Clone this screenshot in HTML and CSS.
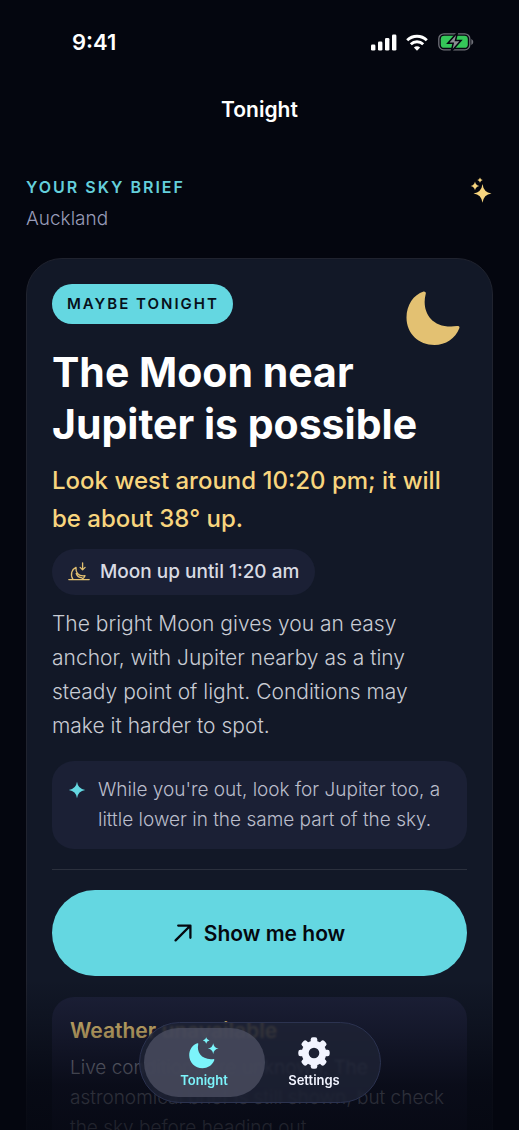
FILE: index.html
```html
<!DOCTYPE html>
<html lang="en">
<head>
<meta charset="utf-8">
<meta name="viewport" content="width=device-width, initial-scale=1">
<title>Tonight</title>
<link rel="stylesheet" href="styles.css">
</head>
<body>
<div class="app">
  <div class="status-bar">
    <time class="clock">9:41</time>
    <div class="status-icons">
      <svg width="26" height="17" viewBox="0 0 26 17" fill="#fff" aria-hidden="true"><rect x="0" y="10.500" width="4.400" height="6" rx="1.300"/><rect x="7" y="7.500" width="4.400" height="9" rx="1.300"/><rect x="14" y="4" width="4.400" height="12.500" rx="1.300"/><rect x="21" y="0.500" width="4.400" height="16" rx="1.300"/></svg>
      <svg width="22" height="17" viewBox="0 0 22 17" aria-hidden="true"><g fill="none" stroke="#fff" stroke-width="2.900"><path d="M1.200 6.300a14 14 0 0 1 19.600 0"/><path d="M4.800 10.200a9 9 0 0 1 12.400 0"/></g><path d="M11 16.800l-3.100-3.200a4.400 4.400 0 0 1 6.200 0z" fill="#fff"/></svg>
      <svg width="36" height="18" viewBox="0 0 36 18" aria-hidden="true"><rect x="0.800" y="0.800" width="31" height="16" rx="5" fill="none" stroke="#6f7078" stroke-width="1.300"/><path d="M33.300 6v6q2-.8 2-3t-2-3z" fill="#6f7078"/><rect x="2.800" y="2.800" width="27" height="12" rx="3.400" fill="#35c759"/><path d="M19.500-.6L9.800 10.200h5.400l-2 8.400L23 7.600h-5.500z" fill="#8b8d92" stroke="#04060f" stroke-width="1.500"/></svg>
    </div>
  </div>
  <header class="nav-bar"><h1>Tonight</h1></header>
  <main class="content">
    <div class="brief">
      <div>
        <p class="eyebrow">YOUR SKY BRIEF</p>
        <p class="place">Auckland</p>
      </div>
      <svg class="brief-icon" width="22" height="28" viewBox="0 0 22 28" fill="#f8d57e" aria-hidden="true"><path d="M12.500 8Q13.500 16.400 21.500 17.400Q13.500 18.400 12.500 26.800Q11.500 18.400 3.500 17.400Q11.500 16.400 12.500 8Z"/><path d="M5 5.500Q5.600 9.300 9.400 9.900Q5.600 10.500 5 14.300Q4.400 10.500 .6 9.900Q4.400 9.300 5 5.500Z"/><path d="M10 1.400Q10.400 3.700 12.700 4.100Q10.400 4.500 10 6.800Q9.600 4.500 7.300 4.100Q9.600 3.700 10 1.400Z"/></svg>
    </div>
    <article class="card">
      <div class="card-top">
        <span class="badge">MAYBE TONIGHT</span>
        <svg class="moon" width="54" height="54" viewBox="0 0 54 54" fill="#e3c172" aria-hidden="true"><path d="M17.600.4Q20.400.2 19.700 3C15.400 19 24 38.500 51 35.100Q54.300 34.700 53.200 37.500C49.500 47.500 39.500 54 28.500 54C12.500 54 .5 42.500 .5 26.500C.5 14 7.500 3.500 17.600.4Z"/></svg>
      </div>
      <h2 class="title">The Moon near Jupiter is possible</h2>
      <p class="direction">Look west around 10:20 pm; it will be about 38° up.</p>
      <p class="chip">
        <svg width="22" height="20" viewBox="0 0 22 20" fill="none" stroke="#e3c172" stroke-width="1.300" stroke-linecap="round" stroke-linejoin="round" aria-hidden="true"><path d="M.8 17.600h20.400M14.600.8v7M12.100 5.400l2.500 2.500 2.500-2.500M5 17.400C1.800 12.500 4 7 8 5.300C7.500 10.500 10 14.500 17 13.700Q16 16 14.200 17.300M8.200 11.500Q9.600 15.500 14 15.900"/></svg>
        Moon up until 1:20 am
      </p>
      <p class="summary">The bright Moon gives you an easy anchor, with Jupiter nearby as a tiny steady point of light. Conditions may make it harder to spot.</p>
      <div class="note">
        <svg width="18" height="18" viewBox="0 0 18 18" fill="#64d7e1" aria-hidden="true"><path d="M9 .8Q10 8 17.200 9Q10 10 9 17.200Q8 10 .8 9Q8 8 9 .8Z"/></svg>
        <p>While you're out, look for Jupiter too, a little lower in the same part of the sky.</p>
      </div>
      <hr class="rule">
      <button class="primary" type="button">
        <svg width="18" height="18" viewBox="0 0 18 18" fill="none" stroke="#05080f" stroke-width="2.300" stroke-linecap="round" stroke-linejoin="round" aria-hidden="true"><path d="M1.600 16.400L16.200 1.800M4.200 1.600h12.200v12.200"/></svg>
        Show me how
      </button>
      <section class="weather">
        <h3>Weather unavailable</h3>
        <p>Live conditions are unknown. The astronomical brief is still shown, but check the sky before heading out.</p>
      </section>
    </article>
  </main>
  <div class="fade"></div>
  <nav class="tabs" aria-label="Main">
    <a class="tab tab-current" href="#tonight" aria-current="page">
      <svg width="30" height="32" viewBox="0 0 30 32" fill="#7cf4fb" aria-hidden="true"><path d="M8.300 6.200Q9.700 5.900 9.200 7.600C7.500 15 12.500 23 23.500 22.200Q26 21.800 25.200 23.500C23 28.500 18.500 31.200 13.500 31.200C6 31.200 .2 25.500 .2 18.300C.2 12.500 3.500 7.800 8.300 6.200Z"/><path d="M24.200 6.200Q24.900 10.900 29.600 11.600Q24.900 12.300 24.200 17Q23.500 12.300 18.800 11.600Q23.500 10.900 24.200 6.200Z"/><path d="M17.200.2Q17.700 3 20.500 3.500Q17.700 4 17.200 6.800Q16.700 4 13.900 3.500Q16.700 3 17.200.2Z"/></svg>
      Tonight
    </a>
    <a class="tab" href="#settings">
      <svg width="32" height="32" viewBox="-16 -16 32 32" aria-hidden="true"><g fill="#f2f4ff"><circle r="12.300"/><g id="teeth"><rect x="-3.300" y="-15.700" width="6.600" height="31.400" rx="2.200"/><rect x="-15.700" y="-3.300" width="31.400" height="6.600" rx="2.200"/></g><use href="#teeth" transform="rotate(45)"/></g><circle r="5.300" fill="#1d2134"/></svg>
      Settings
    </a>
  </nav>
</div>
</body>
</html>
```

FILE: styles.css
```css
* { box-sizing: border-box; }
h1, h2, h3, p { margin: 0; }

body {
  margin: 0;
  background: #04060f;
  color: #fff;
  font-family: Inter, "Liberation Sans", sans-serif;
}

.app {
  position: relative;
  display: flex;
  flex-direction: column;
  height: 100vh;
  overflow: hidden;
}

.status-bar {
  display: flex;
  flex: none;
  align-items: center;
  justify-content: space-between;
  padding: 27px 45px 0 72px;
}
.clock { font-size: 22px; font-weight: 600; line-height: 30px; }
.status-icons { display: flex; align-items: center; gap: 9px; }
.status-icons svg:last-child { margin-left: 1px; }

.nav-bar { flex: none; padding: 38px 26px 0; text-align: center; }
.nav-bar h1 { font-size: 21px; font-weight: 600; line-height: 30px; }

.content {
  flex: 1;
  min-height: 0;
  padding: 49px 26px 120px;
  overflow-y: auto;
  scrollbar-width: none;
}

.brief { display: flex; justify-content: space-between; }
.brief-icon { margin: 2px 1px 0 0; }
.eyebrow {
  color: #64cfdb;
  font-size: 16px;
  font-weight: 600;
  line-height: 26px;
  letter-spacing: 2px;
}
.place { margin-top: 5px; color: #989cb9; font-size: 19px; font-weight: 350; line-height: 28px; }

.card {
  margin-top: 25px;
  padding: 25px;
  border: 1px solid #20232f;
  border-radius: 36px;
  background: #121827;
}
.card-top {
  display: flex;
  align-items: flex-start;
  justify-content: space-between;
  padding-right: 7px;
}
.moon { margin: 7px 0 1px; }
.badge {
  padding: 0 14px 0 15px;
  border-radius: 20px;
  background: #64d7e1;
  color: #07101a;
  font-size: 15px;
  font-weight: 600;
  line-height: 40px;
  letter-spacing: 2px;
}
.title { font-size: 41px; font-weight: 700; line-height: 52px; }
.direction {
  margin-top: 12px;
  color: #f8d57e;
  font-size: 24px;
  font-weight: 500;
  line-height: 38px;
}
.chip {
  display: flex;
  align-items: center;
  gap: 10px;
  width: fit-content;
  margin-top: 11px;
  padding: 0 16px;
  border-radius: 23px;
  background: #1b2035;
  color: #d9dbe3;
  font-size: 19px;
  font-weight: 500;
  line-height: 46px;
}
.summary {
  margin-top: 12px;
  padding-right: 16px;
  color: #c8cbd3;
  font-size: 21px;
  font-weight: 350;
  line-height: 34px;
}
.note {
  display: flex;
  gap: 12px;
  margin-top: 18px;
  padding: 14px 16px;
  border-radius: 22px;
  background: #1b2035;
  color: #babdcb;
  font-size: 19px;
  font-weight: 350;
  line-height: 30px;
}
.note svg { flex: none; margin-top: 6px; }
.rule { margin: 20px 0; border: 0; border-top: 1px solid #2b303d; }
.primary {
  display: flex;
  align-items: center;
  justify-content: center;
  gap: 12px;
  width: 100%;
  height: 86px;
  border: 0;
  border-radius: 43px;
  background: #64d7e1;
  color: #05080f;
  font: 600 21px Inter, "Liberation Sans", sans-serif;
}
.weather {
  margin-top: 21px;
  padding: 16px 12px 16px 18px;
  border-radius: 22px;
  background: #1d2139;
  color: #b7bac8;
  font-size: 19px;
  font-weight: 350;
  line-height: 30px;
}
.weather h3 {
  margin-bottom: 4px;
  color: #f8d57e;
  font-size: 21px;
  font-weight: 600;
  line-height: 36px;
}

.fade {
  position: absolute;
  right: 0;
  bottom: 0;
  left: 0;
  height: 150px;
  background: linear-gradient(rgba(4, 6, 15, 0), rgba(4, 6, 15, 0.35) 35%, rgba(4, 6, 15, 0.75) 70%, rgba(4, 6, 15, 0.85));
  pointer-events: none;
}

.tabs {
  position: absolute;
  bottom: 27px;
  left: 50%;
  display: flex;
  width: 242px;
  padding: 5px 4px;
  border: 1px solid #2c3350;
  border-radius: 41px;
  background: rgba(30, 34, 52, 0.84);
  backdrop-filter: blur(1px);
  transform: translateX(-50%);
}
.tab {
  display: flex;
  flex: none;
  flex-direction: column;
  align-items: center;
  gap: 2px;
  width: 121px;
  padding: 9px 0 8px;
  border-radius: 35px;
  color: #f2f4ff;
  font-size: 13px;
  font-weight: 600;
  line-height: 18px;
  text-decoration: none;
}
.tab + .tab { margin-left: -11px; }
.tab-current { background: rgba(75, 79, 98, 0.8); color: #7cf4fb; }
```
